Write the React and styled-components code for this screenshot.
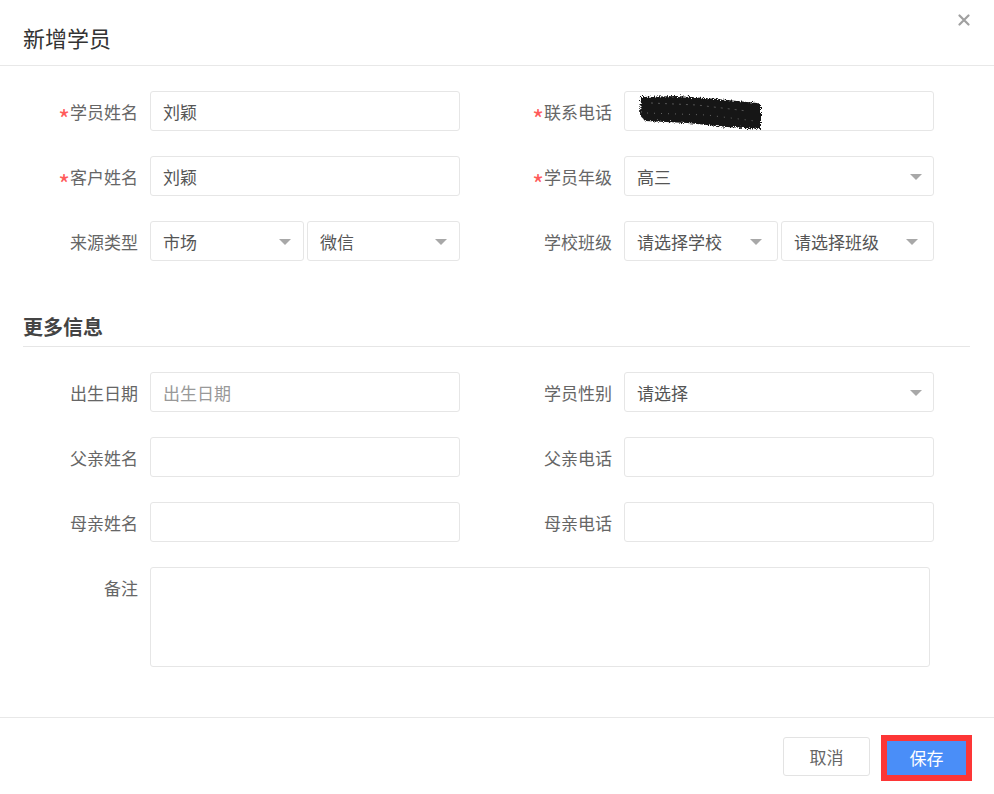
import React from 'react';
import styled, { createGlobalStyle } from 'styled-components';

const GlobalStyle = createGlobalStyle`
  html, body {
    margin: 0;
    padding: 0;
    background: #fff;
  }
  body {
    font-family: 'Noto Sans CJK SC', 'Noto Sans', sans-serif;
    color: #555;
  }
`;

const Modal = styled.div`
  width: 994px;
  height: 794px;
  display: flex;
  flex-direction: column;
  background: #fff;
  box-sizing: border-box;
`;

const Header = styled.div`
  position: relative;
  height: 66px;
  flex-shrink: 0;
  display: flex;
  align-items: center;
  padding-left: 23px;
  border-bottom: 1px solid #e8e8e8;
  box-sizing: border-box;
`;

const Title = styled.h3`
  margin: 0;
  font-size: 22px;
  font-weight: 400;
  color: #333;
  line-height: 1;
  margin-top: 8px;
`;

const Close = styled.button`
  position: absolute;
  top: 13px;
  right: 23px;
  width: 14px;
  height: 14px;
  padding: 0;
  border: 0;
  background: none;
  display: flex;
  align-items: center;
  justify-content: center;
  cursor: pointer;
`;

const Body = styled.div`
  flex: 1;
  padding: 25px 24px 0 23px;
`;

const Grid = styled.div`
  display: grid;
  grid-template-columns: 437px 437px;
  column-gap: 37px;
  row-gap: 25px;
`;

const Field = styled.div`
  display: flex;
  height: ${p => (p.$wide ? 'auto' : '40px')};
  align-items: ${p => (p.$top ? 'flex-start' : 'center')};
  grid-column: ${p => (p.$wide ? '1 / -1' : 'auto')};
`;

const Label = styled.label`
  width: 115px;
  height: 40px;
  flex-shrink: 0;
  margin-right: 12px;
  display: flex;
  align-items: center;
  justify-content: flex-end;
  font-size: 17px;
  color: #666;
  line-height: 1;
  white-space: nowrap;
`;

const Star = styled.span`
  color: #ff5a5a;
  font-size: 25px;
  line-height: 1;
  margin-right: 0;
  position: relative;
  top: 7px;
`;

const Control = styled.div`
  position: relative;
  width: ${p => p.$w || 310}px;
  height: 40px;
  box-sizing: border-box;
  border: 1px solid #e6e6e6;
  border-radius: 3px;
  padding: 0 12px;
  display: flex;
  align-items: center;
  font-size: 17px;
  color: ${p => (p.$placeholder ? '#999' : '#555')};
  background: #fff;
  overflow: hidden;
`;

const Pair = styled.div`
  display: flex;
  gap: 3px;
`;

const Arrow = styled.span`
  position: absolute;
  right: ${p => p.$r || 14}px;
  top: 17px;
  width: 0;
  height: 0;
  border-left: 6px solid transparent;
  border-right: 6px solid transparent;
  border-top: 6px solid #a8a8a8;
`;

const Area = styled.div`
  width: 780px;
  height: 100px;
  box-sizing: border-box;
  border: 1px solid #e6e6e6;
  border-radius: 3px;
`;

const Section = styled.div`
  margin-top: 54px;
  margin-bottom: 25px;
  width: 947px;
  border-bottom: 1px solid #e6e6e6;
  padding-bottom: 7px;
`;

const SectionTitle = styled.h4`
  margin: 0;
  font-size: 20px;
  font-weight: 700;
  color: #444;
  line-height: 1.2;
`;

const Footer = styled.div`
  height: 77px;
  flex-shrink: 0;
  border-top: 1px solid #e8e8e8;
  display: flex;
  align-items: center;
  justify-content: flex-end;
  gap: 17px;
  padding-right: 28px;
  box-sizing: border-box;
`;

const Button = styled.button`
  font-family: inherit;
  font-size: 17px;
  border-radius: 3px;
  cursor: pointer;
  ${p =>
    p.$primary
      ? `
    width: 79px;
    height: 34px;
    background: #4a8ef8;
    color: #fff;
    border: 0;
    outline: 6px solid #fd3636;
    border-radius: 0;
    margin-top: 3px;
  `
      : `
    width: 87px;
    height: 39px;
    background: #fff;
    color: #666;
    border: 1px solid #e3e3e3;
  `}
`;

const Scribble = () => (
  <svg width="130" height="38" viewBox="0 0 130 38" style={{ position: 'absolute', left: 12, top: 1 }}>
    <defs>
      <filter id="rough" x="-10%" y="-20%" width="120%" height="140%">
        <feTurbulence type="fractalNoise" baseFrequency="0.9" numOctaves="3" result="n" />
        <feDisplacementMap in="SourceGraphic" in2="n" scale="6" />
        <feGaussianBlur stdDeviation="0.5" />
      </filter>
    </defs>
    <path
      d="M4 4 L40 3 L80 6 L120 10 L124 12 L124 36 L90 34 L50 30 L8 28 L3 22 Z"
      fill="#151515"
      filter="url(#rough)"
    />
    <path d="M14 10 L60 12 L110 18" stroke="#555" strokeWidth="1" strokeDasharray="2 5" fill="none" />
    <path d="M10 20 L70 22 L118 28" stroke="#666" strokeWidth="1" strokeDasharray="1 6" fill="none" />
  </svg>
);

const Select = ({ value, w, placeholder, r }) => (
  <Control $w={w} $placeholder={placeholder}>
    {value}
    <Arrow $r={r} />
  </Control>
);

const App = () => (
  <Modal>
    <GlobalStyle />
    <Header>
      <Title>新增学员</Title>
      <Close aria-label="close">
        <svg width="12" height="12" viewBox="0 0 12 12">
          <path d="M1.5 1.5 L10.5 10.5 M10.5 1.5 L1.5 10.5" stroke="#a0a0a0" strokeWidth="2.2" strokeLinecap="round" />
        </svg>
      </Close>
    </Header>
    <Body>
      <Grid>
        <Field>
          <Label><Star>*</Star>学员姓名</Label>
          <Control>刘颖</Control>
        </Field>
        <Field>
          <Label><Star>*</Star>联系电话</Label>
          <Control><Scribble /></Control>
        </Field>
        <Field>
          <Label><Star>*</Star>客户姓名</Label>
          <Control>刘颖</Control>
        </Field>
        <Field>
          <Label><Star>*</Star>学员年级</Label>
          <Select value="高三" r={11} />
        </Field>
        <Field>
          <Label>来源类型</Label>
          <Pair>
            <Select value="市场" w={154} r={12} />
            <Select value="微信" w={153} r={12} />
          </Pair>
        </Field>
        <Field>
          <Label>学校班级</Label>
          <Pair>
            <Select value="请选择学校" w={154} r={15} />
            <Select value="请选择班级" w={153} r={15} />
          </Pair>
        </Field>
      </Grid>

      <Section>
        <SectionTitle>更多信息</SectionTitle>
      </Section>

      <Grid>
        <Field>
          <Label>出生日期</Label>
          <Control $placeholder>出生日期</Control>
        </Field>
        <Field>
          <Label>学员性别</Label>
          <Select value="请选择" r={11} />
        </Field>
        <Field>
          <Label>父亲姓名</Label>
          <Control />
        </Field>
        <Field>
          <Label>父亲电话</Label>
          <Control />
        </Field>
        <Field>
          <Label>母亲姓名</Label>
          <Control />
        </Field>
        <Field>
          <Label>母亲电话</Label>
          <Control />
        </Field>
        <Field $wide $top>
          <Label>备注</Label>
          <Area />
        </Field>
      </Grid>
    </Body>
    <Footer>
      <Button>取消</Button>
      <Button $primary>保存</Button>
    </Footer>
  </Modal>
);

export default App;
